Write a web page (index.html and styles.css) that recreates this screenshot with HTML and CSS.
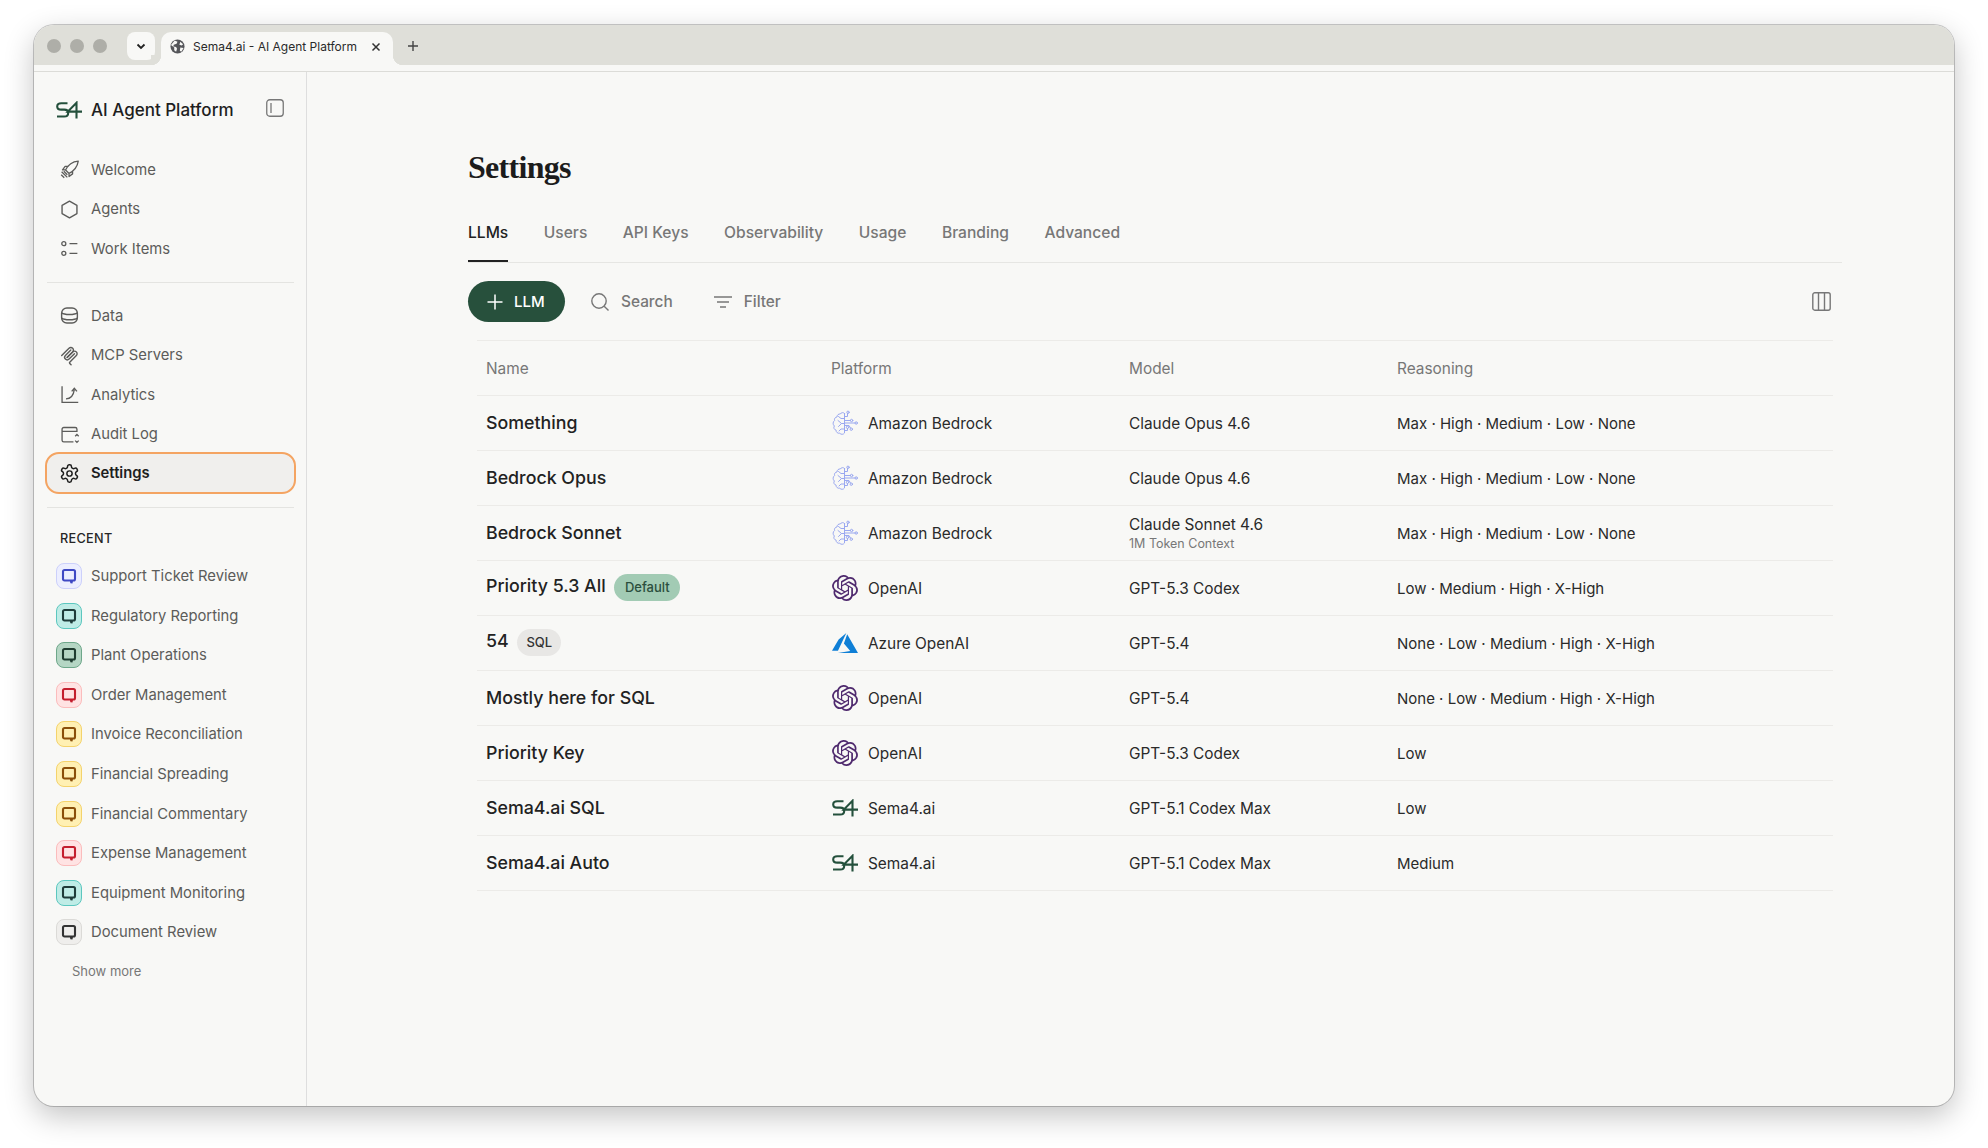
FILE: index.html
```html
<!DOCTYPE html>
<html lang="en">
<head>
<meta charset="UTF-8">
<title>Sema4.ai - AI Agent Platform</title>
<link rel="stylesheet" href="styles.css">
</head>
<body>

<!-- Shared icons -->
<svg class="icon-defs" xmlns="http://www.w3.org/2000/svg">
  <symbol id="i-s4" viewBox="0 0 26 18"><path d="M11.5 2.2H5.2C2.6 2.2 1.2 3.4 1.2 5.4s1.4 3.2 4 3.2h3c2.6 0 4 1.3 4 3.3s-1.4 3.6-4 3.6H1" fill="none" stroke="currentColor" stroke-width="2.1"/><path d="M20.5 17.5V1.8L11.8 10.6H26" fill="none" stroke="currentColor" stroke-width="2.1"/></symbol>
  <symbol id="i-rocket" viewBox="0 0 24 24"><path d="M22 2.5c-6.500.5-11.500 4-14.500 10l4 4c6-3 9.500-7.500 10.500-14z M7.500 12.500H4l3-4h4 M11.500 16.500V20l4-3v-4 M3 14.500l6.500 6.500 M2.500 18l3.500 3.500 M5.500 14l4 4" fill="none" stroke="currentColor" stroke-width="1.5" stroke-linejoin="round"/></symbol>
  <symbol id="i-hex" viewBox="0 0 24 24"><path d="M12 2.500l8.500 4.800v9.400L12 21.500l-8.500-4.800V7.300z" fill="none" stroke="currentColor" stroke-width="1.6" stroke-linejoin="round"/></symbol>
  <symbol id="i-items" viewBox="0 0 24 24"><g fill="none" stroke="currentColor" stroke-width="1.5"><circle cx="5.5" cy="6.5" r="2.3"/><circle cx="5.5" cy="17.5" r="2.3"/><path d="M12 6.5h9 M12 17.5h9"/></g></symbol>
  <symbol id="i-data" viewBox="0 0 24 24"><g fill="none" stroke="currentColor" stroke-width="1.6"><rect x="3" y="3.5" width="18" height="17" rx="6"/><path d="M3 9c3 2.500 15 2.500 18 0 M3 15c3 2.500 15 2.500 18 0"/></g></symbol>
  <symbol id="i-mcp" viewBox="0 0 195 195"><g fill="none" stroke="currentColor" stroke-width="13" stroke-linecap="round"><path d="M25 97.900L92.900 30c9.400-9.400 24.600-9.400 33.900 0 9.400 9.400 9.400 24.600 0 33.900L75.600 115.200"/><path d="M76.300 114.500l50.500-50.600c9.400-9.400 24.600-9.400 33.900 0l.4.400c9.400 9.400 9.400 24.600 0 33.900L99.700 159.600c-3.100 3.100-3.100 8.200 0 11.300l12.600 12.600"/><path d="M109.900 46.900L59.600 97.100c-9.400 9.400-9.400 24.600 0 34 9.400 9.400 24.600 9.400 34 0l50.200-50.200"/></g></symbol>
  <symbol id="i-chart" viewBox="0 0 24 24"><path d="M3.500 2.500V21H22 M8 17c5 0 8.500-3.500 9.500-10.500 M14.500 8.500l3-3.500 3 3.500" fill="none" stroke="currentColor" stroke-width="1.5"/></symbol>
  <symbol id="i-audit" viewBox="0 0 24 24"><path d="M20.500 9V6a2 2 0 0 0-2-2h-13a2 2 0 0 0-2 2v12.500a2 2 0 0 0 2 2h11 M3.500 8.500h17 M18.500 14l2-2 2 2 M18.500 19l2 2 2-2" fill="none" stroke="currentColor" stroke-width="1.5"/></symbol>
  <symbol id="i-gear" viewBox="0 0 24 24"><g fill="none" stroke="currentColor" stroke-width="1.7"><path d="M12.220 2h-.44a2 2 0 0 0-2 2v.18a2 2 0 0 1-1 1.730l-.43.25a2 2 0 0 1-2 0l-.15-.08a2 2 0 0 0-2.730.73l-.22.38a2 2 0 0 0 .73 2.730l.15.1a2 2 0 0 1 1 1.720v.51a2 2 0 0 1-1 1.740l-.15.09a2 2 0 0 0-.73 2.730l.22.38a2 2 0 0 0 2.730.73l.15-.08a2 2 0 0 1 2 0l.43.25a2 2 0 0 1 1 1.730V20a2 2 0 0 0 2 2h.44a2 2 0 0 0 2-2v-.18a2 2 0 0 1 1-1.730l.43-.25a2 2 0 0 1 2 0l.15.08a2 2 0 0 0 2.730-.73l.22-.39a2 2 0 0 0-.73-2.730l-.15-.08a2 2 0 0 1-1-1.740v-.5a2 2 0 0 1 1-1.740l.15-.09a2 2 0 0 0 .73-2.730l-.22-.38a2 2 0 0 0-2.730-.73l-.15.08a2 2 0 0 1-2 0l-.43-.25a2 2 0 0 1-1-1.730V4a2 2 0 0 0-2-2z"/><circle cx="12" cy="12" r="3"/></g></symbol>
  <symbol id="i-chat" viewBox="0 0 24 24"><path d="M6 4h12a2 2 0 0 1 2 2v10a2 2 0 0 1-2 2h-1.800l-1 3.500-.8-3.500H6a2 2 0 0 1-2-2V6a2 2 0 0 1 2-2z" fill="none" stroke="currentColor" stroke-width="2.800"/></symbol>
  <symbol id="i-brain" viewBox="0 0 26 26"><g fill="none" stroke="currentColor" stroke-width="1" stroke-linecap="round" stroke-linejoin="round"><path d="M12.500 3.500V23c-1 1.600-3.600 1.800-4.700.2-2 .5-3.900-1-3.700-3C2 19.600 1.200 17.400 2.400 16 .6 14.600.7 11.700 2.600 10.600 2 8.800 3.200 7 5 7c0-2 1.600-3.300 3.300-3 .9-1.600 3.100-2 4.200-.5z"/><path d="M12.500 8.500H9L6.500 6.500 M12.500 13.500h-3L6 10.500 M9.500 13.500l-3 3 M12.500 19H9l-2 2"/><path d="M12.500 6.500h3v-3 M12.500 10.500h6 M12.500 13h10.500 M12.500 15.500h4.500l1.500 2.500 M12.500 20.500h3v-2"/><circle cx="16" cy="2.300" r="1.200"/><circle cx="19.600" cy="10.500" r="1.200"/><circle cx="24.200" cy="13" r="1.200"/><circle cx="19.300" cy="19.200" r="1.200"/><circle cx="15.500" cy="17.300" r="1.200"/></g></symbol>
  <symbol id="i-openai" viewBox="0 0 24 24"><path fill="currentColor" d="M22.282 9.821a5.985 5.985 0 0 0-.516-4.911 6.046 6.046 0 0 0-6.510-2.900A6.065 6.065 0 0 0 4.981 4.182a5.985 5.985 0 0 0-3.998 2.900 6.046 6.046 0 0 0 .743 7.097 5.980 5.980 0 0 0 .511 4.911 6.051 6.051 0 0 0 6.515 2.900A5.985 5.985 0 0 0 13.260 24a6.056 6.056 0 0 0 5.772-4.206 5.989 5.989 0 0 0 3.998-2.900 6.056 6.056 0 0 0-.748-7.073zm-9.022 12.608a4.476 4.476 0 0 1-2.876-1.041l.142-.08 4.778-2.758a.795.795 0 0 0 .393-.681v-6.737l2.020 1.169a.071.071 0 0 1 .038.052v5.583a4.504 4.504 0 0 1-4.495 4.494zm-9.661-4.125a4.471 4.471 0 0 1-.535-3.014l.142.085 4.783 2.758a.771.771 0 0 0 .781 0l5.843-3.368v2.332a.080.080 0 0 1-.033.062L9.740 19.950a4.499 4.499 0 0 1-6.141-1.646zM2.341 7.896a4.485 4.485 0 0 1 2.365-1.973V11.600a.766.766 0 0 0 .388.677l5.814 3.354-2.020 1.169a.076.076 0 0 1-.071 0l-4.830-2.787A4.504 4.504 0 0 1 2.341 7.872zm16.596 3.856L13.104 8.364 15.119 7.200a.076.076 0 0 1 .071 0l4.830 2.791a4.494 4.494 0 0 1-.676 8.104v-5.677a.790.790 0 0 0-.407-.667zm2.011-3.023l-.142-.085-4.774-2.782a.776.776 0 0 0-.785 0L9.409 9.230V6.897a.066.066 0 0 1 .028-.061l4.830-2.787a4.499 4.499 0 0 1 6.680 4.660zM8.307 12.863l-2.020-1.164a.080.080 0 0 1-.038-.057V6.074a4.499 4.499 0 0 1 7.376-3.454l-.142.081L8.704 5.459a.795.795 0 0 0-.393.681zm1.097-2.365l2.602-1.500 2.607 1.500v2.999l-2.597 1.500-2.607-1.500z"/></symbol>
  <symbol id="i-azure" viewBox="0 0 24 24"><path fill="currentColor" d="M5.483 21.300H24L14.025 4.013l-3.038 8.347 5.836 6.938L5.483 21.300zM13.230 2.700L6.105 8.677 0 19.253h5.505v.014L13.230 2.700z"/></symbol>
</svg>

<div class="window">

  <!-- Browser tabs -->
  <div class="tabbar">
    <span class="light"></span>
    <span class="light"></span>
    <span class="light"></span>
    <span class="tab-menu">
      <svg width="12" height="12" viewBox="0 0 12 12"><path d="M2.500 4.500L6 8l3.500-3.500" fill="none" stroke="#222" stroke-width="1.800"/></svg>
    </span>
    <div class="browser-tab">
      <svg class="globe" width="15" height="15" viewBox="0 0 16 16"><circle cx="8" cy="8" r="7.5" fill="#55565a"/><path d="M5 1.500l3 1.500-1 2-3 1-.5 2 3 .5 1 2-1 3-2-1.500V9L1 6.500zM11 3l3 2.500-1.500 1.500L10 6zM11 9l3.500.5-2.500 4-1.500-1z" fill="#f8f8f6"/></svg>
      <span class="browser-tab-title">Sema4.ai - AI Agent Platform</span>
      <svg class="tab-close" width="10" height="10" viewBox="0 0 10 10"><path d="M1.500 1.500l7 7M8.500 1.500l-7 7" stroke="#333" stroke-width="1.500"/></svg>
    </div>
    <svg class="tab-new" width="12" height="12" viewBox="0 0 12 12"><path d="M6 1v10M1 6h10" stroke="#444" stroke-width="1.400"/></svg>
  </div>
  <div class="tabstrip"></div>

  <div class="app">

    <!-- Sidebar -->
    <aside class="sidebar">
      <div class="brand">
        <svg class="brand-logo"><use href="#i-s4"/></svg>
        <span class="brand-name">AI Agent Platform</span>
        <svg class="brand-toggle" width="18" height="18" viewBox="0 0 18 18"><rect x=".75" y=".75" width="16.500" height="16.500" rx="3" fill="none" stroke="#777" stroke-width="1.300"/><path d="M5 4v10" stroke="#777" stroke-width="1.300"/></svg>
      </div>

      <nav class="nav">
        <a class="nav-row"><svg class="nav-icon"><use href="#i-rocket"/></svg>Welcome</a>
        <a class="nav-row"><svg class="nav-icon"><use href="#i-hex"/></svg>Agents</a>
        <a class="nav-row"><svg class="nav-icon"><use href="#i-items"/></svg>Work Items</a>
      </nav>
      <div class="divider"></div>
      <nav class="nav">
        <a class="nav-row"><svg class="nav-icon"><use href="#i-data"/></svg>Data</a>
        <a class="nav-row"><svg class="nav-icon"><use href="#i-mcp"/></svg>MCP Servers</a>
        <a class="nav-row"><svg class="nav-icon"><use href="#i-chart"/></svg>Analytics</a>
        <a class="nav-row"><svg class="nav-icon"><use href="#i-audit"/></svg>Audit Log</a>
        <a class="nav-row active"><svg class="nav-icon"><use href="#i-gear"/></svg>Settings</a>
      </nav>
      <div class="divider"></div>

      <div class="recent-title">RECENT</div>
      <a class="recent-row"><span class="chat-badge indigo"><svg><use href="#i-chat"/></svg></span>Support Ticket Review</a>
      <a class="recent-row"><span class="chat-badge teal"><svg><use href="#i-chat"/></svg></span>Regulatory Reporting</a>
      <a class="recent-row"><span class="chat-badge green"><svg><use href="#i-chat"/></svg></span>Plant Operations</a>
      <a class="recent-row"><span class="chat-badge red"><svg><use href="#i-chat"/></svg></span>Order Management</a>
      <a class="recent-row"><span class="chat-badge yellow"><svg><use href="#i-chat"/></svg></span>Invoice Reconciliation</a>
      <a class="recent-row"><span class="chat-badge yellow"><svg><use href="#i-chat"/></svg></span>Financial Spreading</a>
      <a class="recent-row"><span class="chat-badge yellow"><svg><use href="#i-chat"/></svg></span>Financial Commentary</a>
      <a class="recent-row"><span class="chat-badge red"><svg><use href="#i-chat"/></svg></span>Expense Management</a>
      <a class="recent-row"><span class="chat-badge teal"><svg><use href="#i-chat"/></svg></span>Equipment Monitoring</a>
      <a class="recent-row"><span class="chat-badge grey"><svg><use href="#i-chat"/></svg></span>Document Review</a>
      <a class="show-more">Show more</a>
    </aside>

    <!-- Settings page -->
    <main class="main">
      <h1 class="page-title">Settings</h1>

      <div class="tabs">
        <a class="tab active">LLMs</a>
        <a class="tab">Users</a>
        <a class="tab">API Keys</a>
        <a class="tab">Observability</a>
        <a class="tab">Usage</a>
        <a class="tab">Branding</a>
        <a class="tab">Advanced</a>
      </div>

      <div class="toolbar">
        <button class="add-button">
          <svg width="18" height="18" viewBox="0 0 18 18"><path d="M9 1.500v15M1.500 9h15" stroke="#fff" stroke-width="1.500"/></svg>
          LLM
        </button>
        <span class="tool search">
          <svg width="20" height="20" viewBox="0 0 20 20"><circle cx="9" cy="9" r="7.200" fill="none" stroke="#777" stroke-width="1.400"/><path d="M14.200 14.200l4.300 4.300" stroke="#777" stroke-width="1.400"/></svg>
          Search
        </span>
        <span class="tool filter">
          <svg width="20" height="14" viewBox="0 0 20 14"><path d="M1 2h18M4 7h12M7 12h6" stroke="#777" stroke-width="1.400"/></svg>
          Filter
        </span>
        <svg class="columns" width="19" height="19" viewBox="0 0 19 19"><rect x=".8" y=".8" width="17.400" height="17.400" rx="2" fill="none" stroke="#777" stroke-width="1.400"/><path d="M6.500 1v17M12.500 1v17" stroke="#777" stroke-width="1.400"/></svg>
      </div>

      <table class="llm-table">
        <colgroup>
          <col class="col-name"><col class="col-platform"><col class="col-model"><col>
        </colgroup>
        <thead>
          <tr><th>Name</th><th>Platform</th><th>Model</th><th>Reasoning</th></tr>
        </thead>
        <tbody>
          <tr>
            <td class="name">Something</td>
            <td><span class="platform"><svg class="bedrock"><use href="#i-brain"/></svg>Amazon Bedrock</span></td>
            <td>Claude Opus 4.6</td>
            <td>Max · High · Medium · Low · None</td>
          </tr>
          <tr>
            <td class="name">Bedrock Opus</td>
            <td><span class="platform"><svg class="bedrock"><use href="#i-brain"/></svg>Amazon Bedrock</span></td>
            <td>Claude Opus 4.6</td>
            <td>Max · High · Medium · Low · None</td>
          </tr>
          <tr>
            <td class="name">Bedrock Sonnet</td>
            <td><span class="platform"><svg class="bedrock"><use href="#i-brain"/></svg>Amazon Bedrock</span></td>
            <td>Claude Sonnet 4.6<div class="model-note">1M Token Context</div></td>
            <td>Max · High · Medium · Low · None</td>
          </tr>
          <tr>
            <td class="name">Priority 5.3 All <span class="pill pill-default">Default</span></td>
            <td><span class="platform"><svg class="openai"><use href="#i-openai"/></svg>OpenAI</span></td>
            <td>GPT-5.3 Codex</td>
            <td>Low · Medium · High · X-High</td>
          </tr>
          <tr>
            <td class="name">54 <span class="pill">SQL</span></td>
            <td><span class="platform"><svg class="azure"><use href="#i-azure"/></svg>Azure OpenAI</span></td>
            <td>GPT-5.4</td>
            <td>None · Low · Medium · High · X-High</td>
          </tr>
          <tr>
            <td class="name">Mostly here for SQL</td>
            <td><span class="platform"><svg class="openai"><use href="#i-openai"/></svg>OpenAI</span></td>
            <td>GPT-5.4</td>
            <td>None · Low · Medium · High · X-High</td>
          </tr>
          <tr>
            <td class="name">Priority Key</td>
            <td><span class="platform"><svg class="openai"><use href="#i-openai"/></svg>OpenAI</span></td>
            <td>GPT-5.3 Codex</td>
            <td>Low</td>
          </tr>
          <tr>
            <td class="name">Sema4.ai SQL</td>
            <td><span class="platform"><svg class="s4"><use href="#i-s4"/></svg>Sema4.ai</span></td>
            <td>GPT-5.1 Codex Max</td>
            <td>Low</td>
          </tr>
          <tr>
            <td class="name">Sema4.ai Auto</td>
            <td><span class="platform"><svg class="s4"><use href="#i-s4"/></svg>Sema4.ai</span></td>
            <td>GPT-5.1 Codex Max</td>
            <td>Medium</td>
          </tr>
        </tbody>
      </table>
    </main>
  </div>
</div>

</body>
</html>
```

FILE: styles.css
```css
/* Page and window */
html,
body {
  height: 1148px;
}

body {
  margin: 0;
  padding: 25px 0 0 34px;
  box-sizing: border-box;
  overflow: hidden;
  background-color: #fff;
  font-family: "Inter", "Liberation Sans", sans-serif;
  color: #222;
}

.icon-defs {
  display: none;
}

.window {
  width: 1920px;
  height: 1081px;
  background-color: #f8f8f6;
  border-radius: 20px;
  overflow: hidden;
  display: flex;
  flex-direction: column;
  box-shadow: 0 0 0 1px rgba(0, 0, 0, 0.2), 0 10px 30px rgba(0, 0, 0, 0.24);
}

/* Browser tabs */
.tabbar {
  height: 40px;
  flex: none;
  display: flex;
  align-items: flex-start;
  padding: 7px 0 0 13px;
  box-sizing: border-box;
  background-color: #dfdfd9;
}

.light {
  width: 14px;
  height: 14px;
  margin: 7px 9px 0 0;
  border-radius: 50%;
  background-color: #aeaea8;
}

.tab-menu {
  width: 28px;
  height: 28px;
  margin-left: 11px;
  border-radius: 8px;
  background-color: #f8f8f6;
  display: flex;
  align-items: center;
  justify-content: center;
}

.browser-tab {
  width: 232px;
  height: 33px;
  margin-left: 6px;
  padding: 0 12px 4px 9px;
  box-sizing: border-box;
  display: flex;
  align-items: center;
  background-color: #f8f8f6;
  border-radius: 10px 10px 0 0;
  position: relative;
}

.browser-tab::after {
  content: "";
  position: absolute;
  right: -10px;
  bottom: 0;
  width: 10px;
  height: 10px;
  background: radial-gradient(circle at 100% 0, #dfdfd9 10px, #f8f8f6 10.5px);
}

.browser-tab::before {
  content: "";
  position: absolute;
  left: -10px;
  bottom: 0;
  width: 10px;
  height: 10px;
  background: radial-gradient(circle at 0 0, #dfdfd9 10px, #f8f8f6 10.5px);
}

.browser-tab-title {
  flex: 1;
  margin-left: 8px;
  font-size: 12px;
  color: #2a2a2a;
  white-space: nowrap;
}

.tab-new {
  margin: 8px 0 0 14px;
}

.tabstrip {
  height: 6px;
  flex: none;
  border-bottom: 1px solid #dcdcd8;
  background-color: #f8f8f6;
}

.app {
  flex: 1;
  display: flex;
  min-height: 0;
}

/* Sidebar */
.sidebar {
  width: 272px;
  flex: none;
  padding-top: 18px;
  border-right: 1px solid #dedede;
}

.brand {
  height: 40px;
  display: flex;
  align-items: center;
  padding-left: 22px;
}

.brand-logo {
  width: 26px;
  height: 18px;
  flex: none;
  color: #24503c;
}

.brand-name {
  margin-left: 9px;
  font-size: 17px;
  font-weight: 500;
  color: #1e1e1e;
}

.brand-toggle {
  margin-left: 32px;
  margin-top: -4px;
}

.nav {
  margin-top: 20px;
}

.divider + .nav {
  margin-top: 13px;
}

.nav-row,
.recent-row {
  display: flex;
  align-items: center;
  height: 39.6px;
  font-size: 14.8px;
  color: #5c5c5a;
}

.nav-row {
  padding-left: 25px;
}

.nav-icon {
  width: 21px;
  height: 21px;
  flex: none;
  margin-right: 11px;
  color: #5c5c5a;
}

.nav-row.active {
  box-sizing: border-box;
  height: 42px;
  margin: -2px 10px 0 11px;
  padding-left: 12px;
  border: 2px solid #f4a462;
  border-radius: 14px;
  background-color: #f0efed;
  color: #1e1e1e;
  font-weight: 600;
}

.nav-row.active .nav-icon {
  color: #1e1e1e;
}

.divider {
  height: 1px;
  margin: 13px 12px 0 13px;
  background-color: #e4e4e1;
}

.recent-title {
  margin: 23px 0 0 26px;
  height: 16px;
  line-height: 16px;
  font-size: 12.7px;
  font-weight: 500;
  letter-spacing: 0.3px;
  color: #262626;
}

.recent-title + .recent-row {
  margin-top: 9px;
}

.recent-row {
  padding-left: 22px;
}

.chat-badge {
  width: 26px;
  height: 26px;
  flex: none;
  box-sizing: border-box;
  margin-right: 9px;
  border: 1px solid;
  border-radius: 8px;
  display: flex;
  align-items: center;
  justify-content: center;
}

.chat-badge svg {
  width: 18px;
  height: 18px;
}

.chat-badge.indigo { background-color: #eceeff; border-color: #ccd0fb; color: #3f49c4; }
.chat-badge.teal { background-color: #bfece6; border-color: #5cc7bf; color: #1f3c3a; }
.chat-badge.green { background-color: #b5d6c4; border-color: #6ea78a; color: #1f3c30; }
.chat-badge.red { background-color: #ffe3e3; border-color: #fbbcbc; color: #c41f2e; }
.chat-badge.yellow { background-color: #fff0b3; border-color: #f4d36b; color: #8a4f0a; }
.chat-badge.grey { background-color: #efeeec; border-color: #dbdad7; color: #333; }

.show-more {
  display: block;
  margin: 11px 0 0 38px;
  font-size: 13px;
  color: #777;
}

/* Main column */
.main {
  flex: 1;
  padding: 70px 112px 0 161px;
  min-width: 0;
}

.page-title {
  margin: 0;
  height: 50px;
  line-height: 50px;
  font-family: "Liberation Serif", serif;
  font-size: 32px;
  font-weight: 700;
  letter-spacing: -0.7px;
  color: #1c1c1c;
}

.tabs {
  display: flex;
  gap: 35.5px;
  margin-top: 23px;
  height: 47px;
  border-bottom: 1px solid #e6e6e3;
}

.tab {
  height: 46px;
  padding-top: 8px;
  box-sizing: border-box;
  font-size: 15.6px;
  font-weight: 500;
  color: #777;
}

.tab.active {
  color: #222;
  border-bottom: 2px solid #222;
  height: 47px;
}

/* Toolbar */
.toolbar {
  display: flex;
  align-items: center;
  height: 41px;
  margin-top: 18px;
  padding-right: 11px;
}

.add-button {
  width: 97px;
  height: 41px;
  border: none;
  border-radius: 21px;
  background-color: #27503c;
  color: #fff;
  font-family: inherit;
  font-size: 15px;
  font-weight: 500;
  display: flex;
  align-items: center;
  gap: 10px;
  padding: 0 0 0 18px;
}

.tool {
  display: flex;
  align-items: center;
  font-size: 15.4px;
  font-weight: 500;
  color: #777;
}

.tool.search {
  margin-left: 25px;
  gap: 11px;
}

.tool.filter {
  margin-left: 40px;
  gap: 11px;
}

.columns {
  margin-left: auto;
}

/* LLM table */
.llm-table {
  width: 1356px;
  margin: 18px 0 0 9px;
  border-collapse: collapse;
  table-layout: fixed;
  font-size: 15.4px;
}

.col-name { width: 345px; }
.col-platform { width: 298px; }
.col-model { width: 268px; }

.llm-table th,
.llm-table td {
  height: 55px;
  padding: 0 9px;
  box-sizing: border-box;
  text-align: left;
  border-bottom: 1px solid #ecebe8;
}

.llm-table thead tr {
  border-top: 1px solid #ecebe8;
}

.llm-table th {
  font-weight: 400;
  color: #777;
}

.llm-table td {
  color: #2a2a2a;
}

.llm-table td:last-child {
  font-size: 15px;
}

.llm-table td.name {
  padding-bottom: 2px;
  font-size: 17.8px;
  font-weight: 450;
  color: #222;
}

.model-note {
  margin-top: 2px;
  font-size: 12.5px;
  color: #777;
}

.pill {
  display: inline-block;
  height: 27px;
  line-height: 27px;
  padding: 0 9px;
  margin-left: 4px;
  border-radius: 14px;
  background-color: #e8e7e5;
  font-size: 13px;
  font-weight: 500;
  color: #333;
  vertical-align: middle;
}

.pill-default {
  padding: 0 10.5px;
  background-color: #a2cbb4;
  color: #2b4f3e;
}

.platform {
  display: flex;
  align-items: center;
  margin-left: 1px;
}

.platform svg {
  width: 26px;
  height: 26px;
  flex: none;
  margin-right: 10px;
}

.platform .bedrock { color: #9aa8f0; }
.platform .openai { color: #4f2a6e; }
.platform .azure { color: #0f7fd6; }
.platform .s4 { color: #24503c; height: 18px; }
```
